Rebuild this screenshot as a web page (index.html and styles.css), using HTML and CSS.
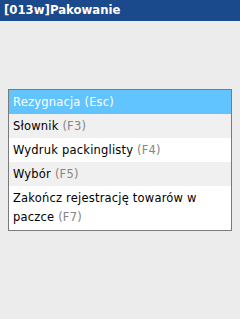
FILE: index.html
```html
<!doctype html>
<html lang="pl">
  <head>
    <meta charset="utf-8" />
    <title>[013w]Pakowanie</title>
    <link rel="stylesheet" href="styles.css">
  </head>
  <body>
    <div class="title_bar">[013w]Pakowanie</div>
    <div class="content">
      <ul class="menu">
        <li class="selected">Rezygnacja <span class="key">(Esc)</span></li>
        <li class="odd">Słownik <span class="key">(F3)</span></li>
        <li>Wydruk packinglisty <span class="key">(F4)</span></li>
        <li class="odd">Wybór <span class="key">(F5)</span></li>
        <li><span>Zakończ rejestrację towarów w</span> <span class="nowrap">paczce <span class="key">(F7)</span></span></li>
      </ul>
    </div>
  </body>
</html>
```

FILE: styles.css
```css
/* whole page */
body{
  margin: 0;
  background-color: #ececec;
  font-family: "DejaVu Sans", Verdana, sans-serif;
  font-size: 11.5px;
  height: 319px;
}
/* blue bar on top */
.title_bar{
  background-color: #1a4a8c;
  color: #fff;
  font-weight: 700;
  font-size: 11.7px;
  height: 21px;
  line-height: 20px;
  padding-left: 4px;
}
.content{
  padding: 68px 8px 0 8px;
}
/* the list of options */
.menu{
  list-style: none;
  margin: 0;
  padding: 0;
  background-color: #fff;
  border: 1px solid #7a7a7a;
}
.menu li{
  padding: 3px 4px 2px 4px;
  line-height: 19px;
  color: #000;
  letter-spacing: 0.2px;
}
.menu li.odd{
  background-color: #f0f0f0;
}
.menu li:last-child{
  padding-bottom: 3px;
}
.nowrap{
  white-space: nowrap;
}
.key{
  color: #858585;
}
.menu li.selected{
  background-color: #62c4ff;
  color: #fff;
}
.menu li.selected .key{
  color: #fff;
}
```
